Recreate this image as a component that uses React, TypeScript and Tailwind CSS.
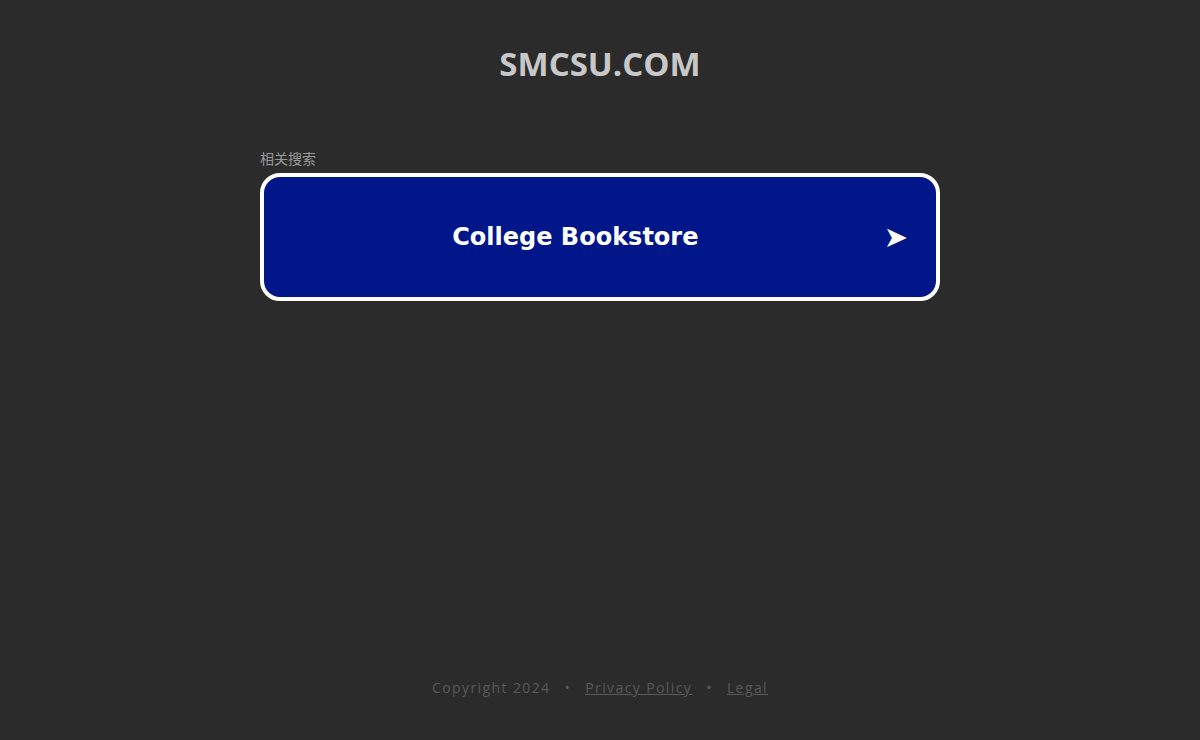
import React from "react";

export default function App() {
  return (
    <div className="w-full h-[740px] bg-[#2b2b2b] flex flex-col items-center overflow-hidden">
      <h1
        className="mt-[43px] text-[33px] leading-[42px] font-bold text-[#c8c8c8]"
        style={{ fontFamily: '"Open Sans", "Noto Sans", sans-serif' }}
      >
        SMCSU.COM
      </h1>
      <div className="w-[680px] mt-[64px]">
        <div
          className="text-[14px] leading-[18px] text-[#9a9a9a]"
          style={{ fontFamily: '"Noto Sans CJK SC", sans-serif' }}
        >
          相关搜索
        </div>
        <div className="mt-[6px] h-[128px] rounded-[20px] border-[4px] border-white bg-[#011689] flex items-center pl-[26px] pr-[28px]">
          <div
            className="flex-1 text-center text-white text-[24px] font-bold"
            style={{ fontFamily: '"DejaVu Sans", Verdana, sans-serif' }}
          >
            College Bookstore
          </div>
          <span
            className="ml-[23px] text-white text-[29px] leading-none"
            style={{ fontFamily: '"DejaVu Sans", sans-serif' }}
          >
            ➤
          </span>
        </div>
      </div>
      <div
        className="mt-auto mb-[42px] text-[14px] tracking-[1.4px] text-[#5a5a5a] flex items-center gap-[14px]"
        style={{ fontFamily: '"Open Sans", "Noto Sans", sans-serif' }}
      >
        <span>Copyright 2024</span>
        <span>•</span>
        <a className="underline">Privacy Policy</a>
        <span>•</span>
        <a className="underline">Legal</a>
      </div>
    </div>
  );
}
